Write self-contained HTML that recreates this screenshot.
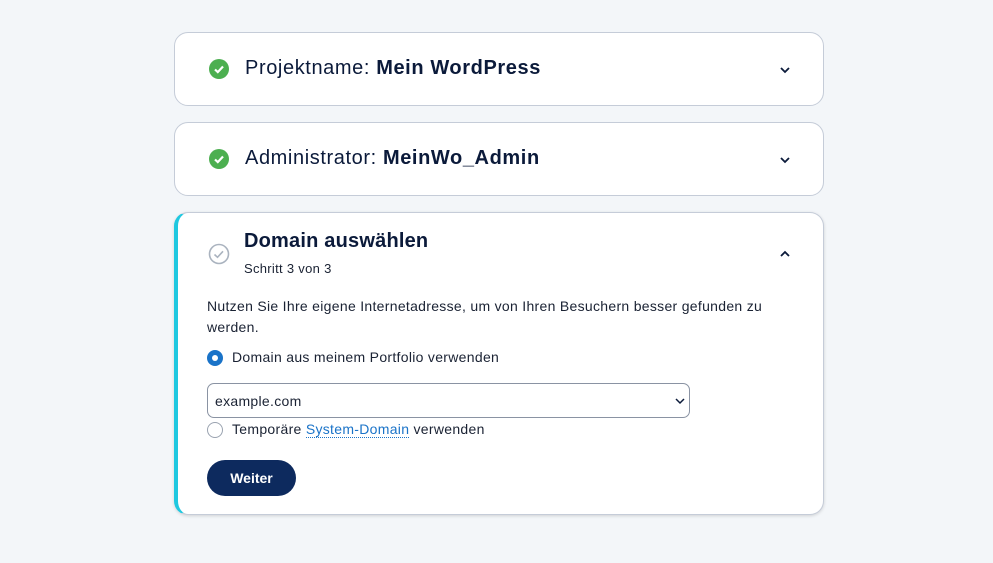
<!DOCTYPE html>
<html><head><style>
body{margin:0;background:#f3f6f9;font-family:"Liberation Sans",sans-serif;color:#0b1a3a;width:993px;height:563px;position:relative;overflow:hidden}
.card{position:absolute;left:174px;width:650px;background:#fff;border:1px solid #c5ccd8;border-radius:14px;box-sizing:border-box}
.h{position:absolute;left:70px;font-size:20px;letter-spacing:0.6px}
.ok{position:absolute;left:34px;width:20px;height:20px;border-radius:50%;background:#4caf50}
.chev{position:absolute;right:32px}
.t{position:absolute;font-size:14px;color:#1a2233;letter-spacing:0.3px}
</style></head><body>
<div class="card" style="top:32px;height:74px">
<div class="ok" style="top:26px"><svg width="20" height="20"><path d="M6 10.5l2.8 2.6L14 7.5" stroke="#fff" stroke-width="2.2" fill="none"/></svg></div>
<div class="h" style="top:24px">Projektname: <b>Mein WordPress</b></div>
<svg class="chev" style="top:31px" width="12" height="12"><path d="M2 4l4 4 4-4" stroke="#0b1a3a" stroke-width="1.8" fill="none"/></svg>
</div>
<div class="card" style="top:122px;height:74px">
<div class="ok" style="top:26px"><svg width="20" height="20"><path d="M6 10.5l2.8 2.6L14 7.5" stroke="#fff" stroke-width="2.2" fill="none"/></svg></div>
<div class="h" style="top:24px">Administrator: <b>MeinWo_Admin</b></div>
<svg class="chev" style="top:31px" width="12" height="12"><path d="M2 4l4 4 4-4" stroke="#0b1a3a" stroke-width="1.8" fill="none"/></svg>
</div>
<div class="card" style="top:212px;height:303px;border-left:4px solid #1ec8e0;box-shadow:0 1px 3px rgba(0,0,0,.15)">
<svg style="position:absolute;left:30px;top:30px" width="22" height="22"><circle cx="11" cy="11" r="9.5" stroke="#aab3bf" stroke-width="1.6" fill="none"/><path d="M6.5 11.5l3 2.8 5.5-6" stroke="#aab3bf" stroke-width="1.6" fill="none"/></svg>
<div class="h" style="top:17px;left:66px;font-weight:bold;letter-spacing:0.2px">Domain auswählen</div>
<div class="t" style="left:66px;top:48px;font-size:13px">Schritt 3 von 3</div>
<svg class="chev" style="top:35px" width="12" height="12"><path d="M2 8l4-4 4 4" stroke="#0b1a3a" stroke-width="1.8" fill="none"/></svg>
<div class="t" style="left:29px;top:83px;width:570px;line-height:21px">Nutzen Sie Ihre eigene Internetadresse, um von Ihren Besuchern besser gefunden zu werden.</div>
<div style="position:absolute;left:29px;top:137px;width:16px;height:16px;border-radius:50%;background:#1a73c8"><div style="position:absolute;left:5px;top:5px;width:6px;height:6px;border-radius:50%;background:#fff"></div></div>
<div class="t" style="left:54px;top:136px">Domain aus meinem Portfolio verwenden</div>
<div style="position:absolute;left:29px;top:170px;width:483px;height:35px;border:1px solid #8a93a3;border-radius:7px;box-sizing:border-box"><span class="t" style="left:7px;top:9px">example.com</span><svg style="position:absolute;right:4px;top:12px" width="10" height="10"><path d="M1 3l4 4 4-4" stroke="#0b1a3a" stroke-width="1.5" fill="none"/></svg></div>
<div style="position:absolute;left:29px;top:209px;width:16px;height:16px;border-radius:50%;border:1px solid #9aa3b0;box-sizing:border-box"></div>
<div class="t" style="left:54px;top:208px">Temporäre <span style="color:#1a73c8;border-bottom:1px dotted #1a73c8">System-Domain</span> verwenden</div>
<div style="position:absolute;left:29px;top:247px;width:89px;height:36px;border-radius:18px;background:#0d2a5e;color:#fff;font-weight:bold;font-size:14px;text-align:center;line-height:36px">Weiter</div>
</div>
</body></html>
